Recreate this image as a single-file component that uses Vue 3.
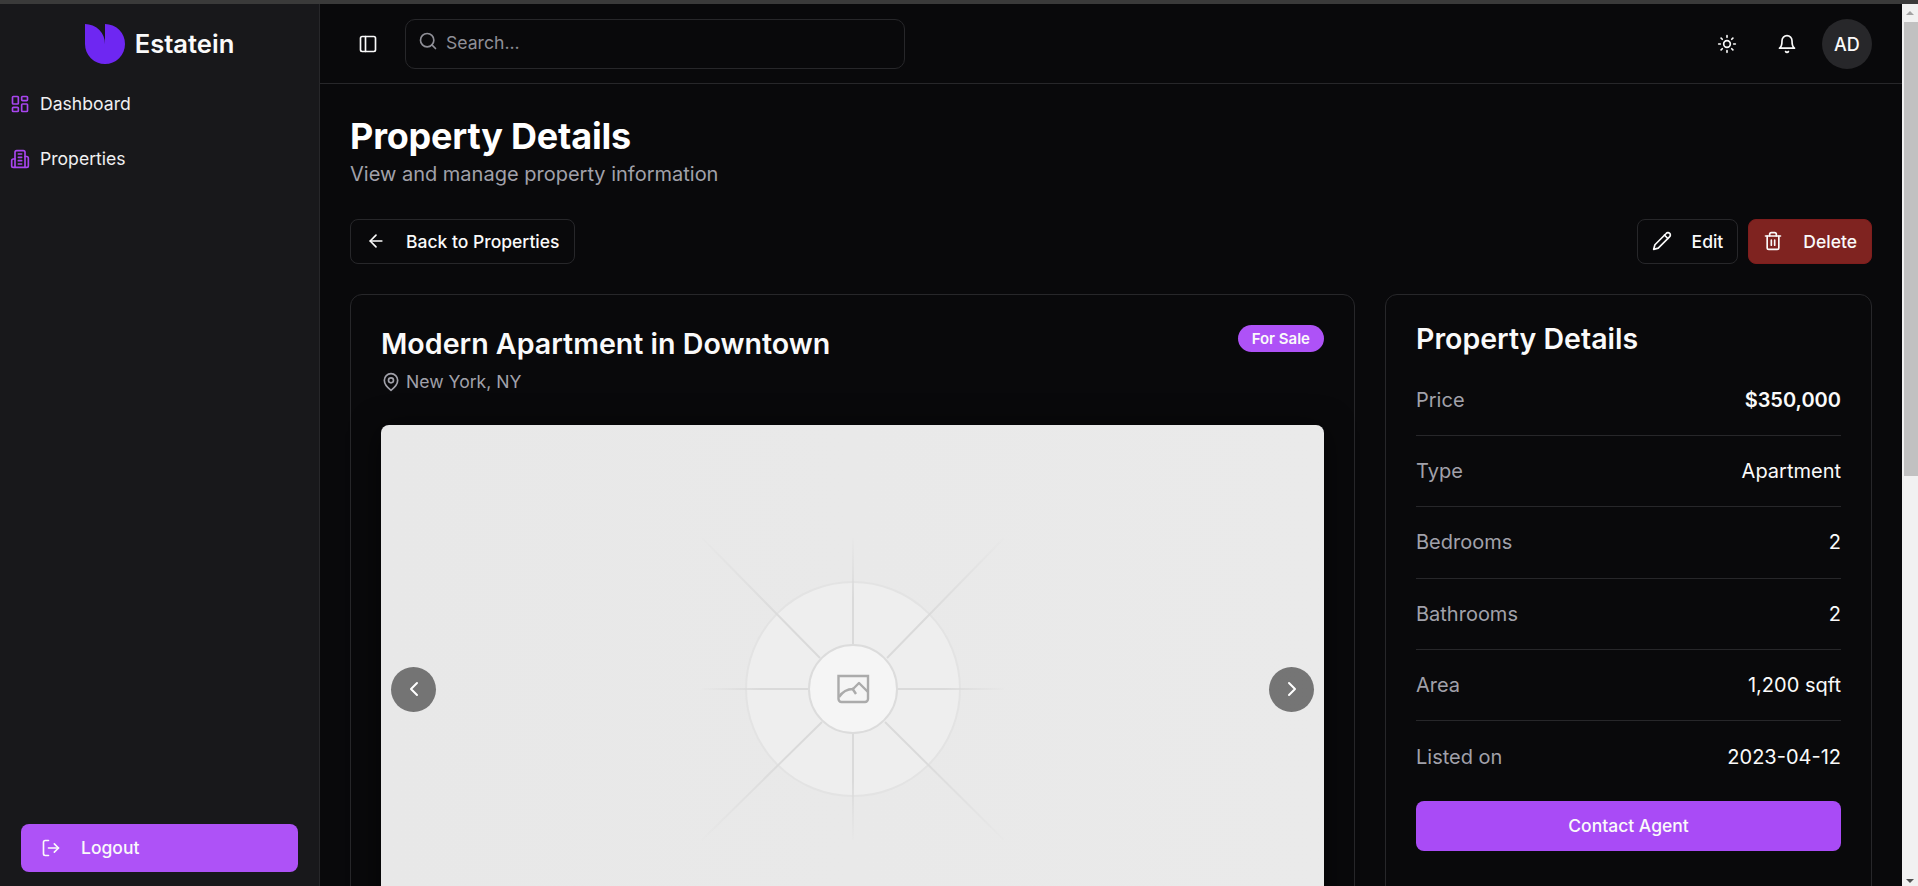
<template>
  <div class="window">
    <div class="top-strip"></div>
    <div class="shell">
      <aside class="sidebar">
        <div class="brand">
          <svg class="logo" width="40" height="40" viewBox="0 0 40 40">
            <path d="M20 0A20 20 0 1 1 0 20V0A20 20 0 0 1 20 20Z" fill="#6e27f2" />
          </svg>
          <span class="brand-name">Estatein</span>
        </div>

        <nav class="nav">
          <a v-for="item in navItems" :key="item.label" class="nav-item">
            <svg class="nav-icon" width="20" height="20" viewBox="0 0 24 24" fill="none" stroke="currentColor" stroke-width="2" stroke-linecap="round" stroke-linejoin="round">
              <path v-for="d in item.paths" :key="d" :d="d" />
            </svg>
            <span class="nav-label">{{ item.label }}</span>
          </a>
        </nav>

        <button class="logout">
          <svg width="20" height="20" viewBox="0 0 24 24" fill="none" stroke="currentColor" stroke-width="2" stroke-linecap="round" stroke-linejoin="round">
            <path d="M9 21H5a2 2 0 0 1-2-2V5a2 2 0 0 1 2-2h4" />
            <path d="m16 17 5-5-5-5" />
            <path d="M21 12H9" />
          </svg>
          <span>Logout</span>
        </button>
      </aside>

      <div class="content">
        <header class="topbar">
          <button class="icon-btn toggle">
            <svg width="20" height="20" viewBox="0 0 24 24" fill="none" stroke="currentColor" stroke-width="2" stroke-linecap="round" stroke-linejoin="round">
              <rect x="3" y="3" width="18" height="18" rx="2" />
              <path d="M9 3v18" />
            </svg>
          </button>
          <div class="search">
            <svg width="20" height="20" viewBox="0 0 24 24" fill="none" stroke="currentColor" stroke-width="2" stroke-linecap="round" stroke-linejoin="round">
              <circle cx="11" cy="11" r="8" />
              <path d="m21 21-4.3-4.3" />
            </svg>
            <span>Search...</span>
          </div>
          <div class="topbar-right">
            <button class="icon-btn">
              <svg width="20" height="20" viewBox="0 0 24 24" fill="none" stroke="currentColor" stroke-width="2" stroke-linecap="round" stroke-linejoin="round">
                <circle cx="12" cy="12" r="4" />
                <path d="M12 2v2M12 20v2M4.93 4.93l1.41 1.41M17.66 17.66l1.41 1.41M2 12h2M20 12h2M6.34 17.66l-1.41 1.41M19.07 4.93l-1.41 1.41" />
              </svg>
            </button>
            <button class="icon-btn">
              <svg width="20" height="20" viewBox="0 0 24 24" fill="none" stroke="currentColor" stroke-width="2" stroke-linecap="round" stroke-linejoin="round">
                <path d="M6 8a6 6 0 0 1 12 0c0 7 3 9 3 9H3s3-2 3-9" />
                <path d="M10.3 21a1.94 1.94 0 0 0 3.4 0" />
              </svg>
            </button>
            <div class="avatar">AD</div>
          </div>
        </header>

        <main class="page">
          <h1>Property Details</h1>
          <p class="subtitle">View and manage property information</p>

          <div class="actions">
            <button class="btn">
              <svg width="20" height="20" viewBox="0 0 24 24" fill="none" stroke="currentColor" stroke-width="2" stroke-linecap="round" stroke-linejoin="round">
                <path d="m12 19-7-7 7-7" />
                <path d="M19 12H5" />
              </svg>
              <span>Back to Properties</span>
            </button>
            <div class="actions-right">
              <button class="btn">
                <svg width="20" height="20" viewBox="0 0 24 24" fill="none" stroke="currentColor" stroke-width="2" stroke-linecap="round" stroke-linejoin="round">
                  <path d="M17 3a2.85 2.83 0 1 1 4 4L7.5 20.5 2 22l1.5-5.5Z" />
                  <path d="m15 5 4 4" />
                </svg>
                <span>Edit</span>
              </button>
              <button class="btn danger">
                <svg width="20" height="20" viewBox="0 0 24 24" fill="none" stroke="currentColor" stroke-width="2" stroke-linecap="round" stroke-linejoin="round">
                  <path d="M3 6h18" />
                  <path d="M19 6v14c0 1-1 2-2 2H7c-1 0-2-1-2-2V6" />
                  <path d="M8 6V4c0-1 1-2 2-2h4c1 0 2 1 2 2v2" />
                  <path d="M10 11v6M14 11v6" />
                </svg>
                <span>Delete</span>
              </button>
            </div>
          </div>

          <div class="columns">
            <section class="card main-card">
              <div class="card-head">
                <div>
                  <h2 class="title">Modern Apartment in Downtown</h2>
                  <div class="location">
                    <svg width="20" height="20" viewBox="0 0 24 24" fill="none" stroke="currentColor" stroke-width="2" stroke-linecap="round" stroke-linejoin="round">
                      <path d="M20 10c0 6-8 12-8 12s-8-6-8-12a8 8 0 0 1 16 0Z" />
                      <circle cx="12" cy="10" r="3" />
                    </svg>
                    <span>New York, NY</span>
                  </div>
                </div>
                <span class="badge">For Sale</span>
              </div>

              <div class="gallery">
                <svg width="304" height="304" viewBox="-152 -152 304 304" fill="none">
                  <defs>
                    <radialGradient id="ray" gradientUnits="userSpaceOnUse" cx="0" cy="0" r="152">
                      <stop offset="0.6" stop-color="#dadada" />
                      <stop offset="1" stop-color="#dadada" stop-opacity="0.05" />
                    </radialGradient>
                    <radialGradient id="rayDiag" gradientUnits="userSpaceOnUse" cx="0" cy="0" r="214">
                      <stop offset="0.45" stop-color="#dadada" />
                      <stop offset="1" stop-color="#dadada" stop-opacity="0.05" />
                    </radialGradient>
                  </defs>
                  <circle r="107" fill="#eeeeee" stroke="#e3e3e3" stroke-width="2" />
                  <path d="M0-151V-44M0 44V151M-151 0H-44M44 0H151" stroke="url(#ray)" stroke-width="2" />
                  <path d="M-151-151L-33-31M34-31L151-151M-31 33L-151 151M32 33L151 151" stroke="url(#rayDiag)" stroke-width="2" />
                  <circle r="44" fill="#f5f5f5" stroke="#dcdcdc" stroke-width="2" />
                  <g stroke="#ababab" stroke-width="2.4">
                    <path d="M-14.500-13H15V10a3 3 0 0 1-3 3H-11.500a3 3 0 0 1-3-3Z" />
                    <path d="M-14 8C-10 2-5 0 0 0L6-6 15 3" stroke-linejoin="round" />
                    <path d="M-1-1 3 5" />
                  </g>
                </svg>
                <button class="nav-arrow prev">
                  <svg width="24" height="24" viewBox="0 0 24 24" fill="none" stroke="currentColor" stroke-width="2" stroke-linecap="round" stroke-linejoin="round">
                    <path d="m15 18-6-6 6-6" />
                  </svg>
                </button>
                <button class="nav-arrow next">
                  <svg width="24" height="24" viewBox="0 0 24 24" fill="none" stroke="currentColor" stroke-width="2" stroke-linecap="round" stroke-linejoin="round">
                    <path d="m9 18 6-6-6-6" />
                  </svg>
                </button>
              </div>
            </section>

            <section class="card side-card">
              <h2 class="side-title">Property Details</h2>
              <div v-for="row in details" :key="row.label" class="row">
                <span class="row-label">{{ row.label }}</span>
                <span :class="['row-value', { strong: row.strong }]">{{ row.value }}</span>
              </div>
              <button class="contact">Contact Agent</button>
            </section>
          </div>
        </main>
      </div>

      <div class="scrollbar">
        <span class="arrow up"></span>
        <div class="thumb"></div>
        <span class="arrow down"></span>
      </div>
    </div>
  </div>
</template>

<script setup>
const navItems = [
  {
    label: 'Dashboard',
    paths: [
      'M4 3h5a1 1 0 0 1 1 1v7a1 1 0 0 1-1 1H4a1 1 0 0 1-1-1V4a1 1 0 0 1 1-1Z',
      'M15 3h5a1 1 0 0 1 1 1v3a1 1 0 0 1-1 1h-5a1 1 0 0 1-1-1V4a1 1 0 0 1 1-1Z',
      'M15 12h5a1 1 0 0 1 1 1v7a1 1 0 0 1-1 1h-5a1 1 0 0 1-1-1v-7a1 1 0 0 1 1-1Z',
      'M4 16h5a1 1 0 0 1 1 1v3a1 1 0 0 1-1 1H4a1 1 0 0 1-1-1v-3a1 1 0 0 1 1-1Z'
    ]
  },
  {
    label: 'Properties',
    paths: [
      'M6 22V4a2 2 0 0 1 2-2h8a2 2 0 0 1 2 2v18Z',
      'M6 12H4a2 2 0 0 0-2 2v6a2 2 0 0 0 2 2h2',
      'M18 9h2a2 2 0 0 1 2 2v9a2 2 0 0 1-2 2h-2',
      'M10 6h4',
      'M10 10h4',
      'M10 14h4',
      'M10 18h4'
    ]
  }
]

const details = [
  { label: 'Price', value: '$350,000', strong: true },
  { label: 'Type', value: 'Apartment' },
  { label: 'Bedrooms', value: '2' },
  { label: 'Bathrooms', value: '2' },
  { label: 'Area', value: '1,200 sqft' },
  { label: 'Listed on', value: '2023-04-12' }
]
</script>

<style>
html, body {
  margin: 0;
  overflow: hidden;
  background: #09090b;
}
</style>

<style scoped>
.window {
  height: 886px;
  display: flex;
  flex-direction: column;
  overflow: hidden;
  background: #09090b;
  color: #fafafa;
  font-family: Inter, "Liberation Sans", sans-serif;
}

.top-strip {
  height: 4px;
  flex: none;
  background: #3a3a3a;
}

.shell {
  flex: 1;
  display: flex;
  min-height: 0;
}

button {
  font-family: inherit;
  color: inherit;
  border: none;
  background: none;
  padding: 0;
}

.sidebar {
  width: 320px;
  flex: none;
  box-sizing: border-box;
  border-right: 1px solid #27272a;
  background: #18181b;
  display: flex;
  flex-direction: column;
}

.brand {
  height: 40px;
  padding: 20px 0 15px;
  display: flex;
  align-items: center;
  justify-content: center;
  gap: 10px;
}

.brand-name {
  font-size: 25.6px;
  font-weight: 600;
  padding-bottom: 2px;
}

.nav {
  flex: 1;
  display: flex;
  flex-direction: column;
  gap: 5px;
  padding: 0 10px;
}

.nav-item {
  height: 50px;
  display: flex;
  align-items: center;
  gap: 10px;
  font-size: 17.6px;
  color: #f0f0f2;
}

.nav-label {
  padding-bottom: 2px;
}

.nav-icon {
  color: #a845ef;
}

.logout {
  margin: 0 21px 14px;
  height: 48px;
  display: flex;
  align-items: center;
  gap: 20px;
  padding: 0 0 1px 20px;
  border-radius: 8px;
  background: #ae52f7;
  font-size: 17.5px;
  font-weight: 500;
}

.content {
  flex: 1;
  min-width: 0;
  display: flex;
  flex-direction: column;
}

.topbar {
  height: 80px;
  flex: none;
  box-sizing: border-box;
  border-bottom: 1px solid #27272a;
  display: flex;
  align-items: center;
  padding: 1px 30px 0 28px;
}

.icon-btn {
  width: 40px;
  height: 40px;
  display: flex;
  align-items: center;
  justify-content: center;
}

.toggle {
  margin-right: 17px;
}

.search {
  width: 500px;
  height: 50px;
  box-sizing: border-box;
  border: 1px solid #27272a;
  border-radius: 10px;
  display: flex;
  align-items: center;
  gap: 8px;
  padding: 0 0 3px 12px;
  font-size: 17.6px;
  color: #8f8f97;
}

.search svg {
  margin-top: -4px;
}

.topbar-right {
  margin-left: auto;
  display: flex;
  align-items: center;
  gap: 20px;
}

.avatar {
  width: 50px;
  height: 50px;
  border-radius: 50%;
  background: #27272a;
  display: flex;
  align-items: center;
  justify-content: center;
  font-size: 18px;
  font-weight: 500;
  margin-left: -5px;
}

.page {
  flex: 1;
  min-height: 0;
  padding: 30px 30px 0;
  overflow: hidden;
}

h1 {
  margin: 0;
  font-size: 36px;
  line-height: 44px;
  font-weight: 700;
  letter-spacing: -0.2px;
  color: #ffffff;
}

.subtitle {
  margin: 2px 0 0;
  font-size: 20px;
  line-height: 28px;
  color: #a1a1aa;
}

.actions {
  margin-top: 31px;
  display: flex;
  justify-content: space-between;
}

.actions-right {
  display: flex;
  gap: 10px;
}

.btn {
  height: 45px;
  box-sizing: border-box;
  border: 1px solid #27272a;
  border-radius: 8px;
  display: flex;
  align-items: center;
  gap: 20px;
  padding: 0 15px 1px;
  font-size: 17.5px;
  font-weight: 500;
}

.actions-right .btn {
  padding: 0 14px 1px;
}

.btn.danger {
  border-color: #7f1d1d;
  background: #7f2320;
}

.columns {
  margin-top: 30px;
  display: grid;
  grid-template-columns: 1005px 487px;
  gap: 30px;
}

.card {
  box-sizing: border-box;
  border: 1px solid #27272a;
  border-radius: 12px;
  padding: 30px;
}

.card-head {
  display: flex;
  justify-content: space-between;
  align-items: flex-start;
  margin-bottom: 32px;
}

.title {
  margin: 0;
  font-size: 28.6px;
  line-height: 38px;
  font-weight: 600;
}

.location {
  margin-top: 8px;
  height: 21px;
  margin-bottom: 1px;
  display: flex;
  align-items: center;
  gap: 5px;
  font-size: 17.6px;
  color: #a1a1aa;
}

.badge {
  height: 27px;
  box-sizing: border-box;
  border-radius: 14px;
  padding: 0 14px;
  display: flex;
  align-items: center;
  background: #ae52f7;
  font-size: 15px;
  font-weight: 600;
}

.gallery {
  position: relative;
  height: 528px;
  border-radius: 8px;
  background: linear-gradient(90deg, #e8e8e8, #eaeaea);
  box-shadow: 0 4px 30px rgba(0, 0, 0, 0.6);
  display: flex;
  align-items: center;
  justify-content: center;
}

.nav-arrow {
  position: absolute;
  top: 50%;
  width: 45px;
  height: 45px;
  margin-top: -22.5px;
  border-radius: 50%;
  background: rgba(0, 0, 0, 0.5);
  color: #ffffff;
  display: flex;
  align-items: center;
  justify-content: center;
}

.prev {
  left: 10px;
}

.next {
  right: 10px;
}

.side-title {
  margin: 0 0 12px;
  font-size: 28.5px;
  line-height: 28px;
  font-weight: 600;
}

.row {
  height: 71.2px;
  box-sizing: border-box;
  border-bottom: 1px solid #27272a;
  display: flex;
  align-items: center;
  justify-content: space-between;
  font-size: 20px;
}

.row:nth-last-child(2) {
  border-bottom: none;
  margin-bottom: 9px;
}

.row-label {
  color: #a1a1aa;
}

.row-value.strong {
  font-weight: 600;
}

.contact {
  width: 100%;
  height: 50px;
  padding-bottom: 1px;
  border-radius: 8px;
  background: #a94bf6;
  font-size: 17.5px;
  font-weight: 500;
}

.scrollbar {
  width: 16px;
  flex: none;
  background: #f1f1f1;
  display: flex;
  flex-direction: column;
  align-items: flex-end;
  position: relative;
}

.thumb {
  position: absolute;
  top: 18px;
  left: 2px;
  right: 0;
  height: 454px;
  background: #c1c1c1;
}

.arrow {
  position: absolute;
  left: 4px;
  width: 0;
  height: 0;
  border-left: 4px solid transparent;
  border-right: 4px solid transparent;
}

.arrow.up {
  top: 7px;
  border-bottom: 4px solid #a3a3a3;
}

.arrow.down {
  bottom: 3px;
  border-top: 4px solid #505050;
}
</style>
